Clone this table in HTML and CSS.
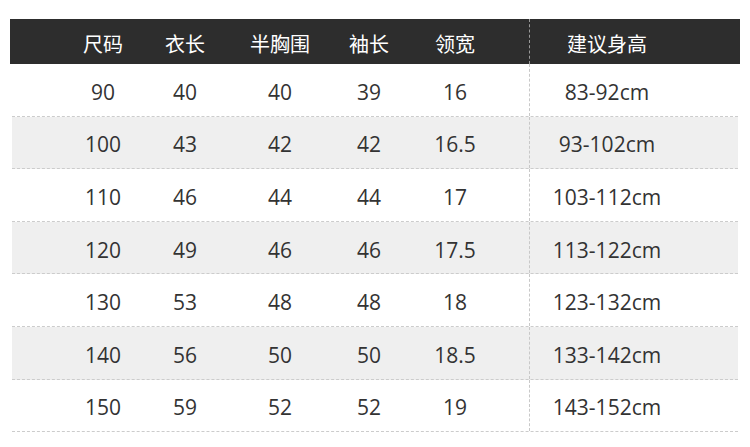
FILE: index.html
```html
<!DOCTYPE html>
<html lang="zh">
<head>
<meta charset="utf-8">
<link rel="stylesheet" href="styles.css">
</head>
<body>
<div class="table">
  <div class="row head">
    <span class="pad"></span>
    <span>尺码</span><span>衣长</span><span>半胸围</span><span>袖长</span><span>领宽</span><span class="gap"></span>
    <span class="h">建议身高</span>
  </div>
  <div class="body">
    <div class="row"><span class="pad"></span><span>90</span><span>40</span><span>40</span><span>39</span><span>16</span><span class="gap"></span><span class="h">83-92cm</span></div>
    <div class="row alt"><span class="pad"></span><span>100</span><span>43</span><span>42</span><span>42</span><span>16.5</span><span class="gap"></span><span class="h">93-102cm</span></div>
    <div class="row"><span class="pad"></span><span>110</span><span>46</span><span>44</span><span>44</span><span>17</span><span class="gap"></span><span class="h">103-112cm</span></div>
    <div class="row alt"><span class="pad"></span><span>120</span><span>49</span><span>46</span><span>46</span><span>17.5</span><span class="gap"></span><span class="h">113-122cm</span></div>
    <div class="row"><span class="pad"></span><span>130</span><span>53</span><span>48</span><span>48</span><span>18</span><span class="gap"></span><span class="h">123-132cm</span></div>
    <div class="row alt"><span class="pad"></span><span>140</span><span>56</span><span>50</span><span>50</span><span>18.5</span><span class="gap"></span><span class="h">133-142cm</span></div>
    <div class="row"><span class="pad"></span><span>150</span><span>59</span><span>52</span><span>52</span><span>19</span><span class="gap"></span><span class="h">143-152cm</span></div>
  </div>
</div>
</body>
</html>
```
FILE: styles.css
```css
html, body {
  margin: 0;
  padding: 0;
  background: #ffffff;
}
body {
  font-family: "Open Sans", "Noto Sans CJK SC", sans-serif;
  font-size: 21px;
  color: #333333;
}
.table {
  width: 730px;
  margin: 19px 0 0 10px;
}
.row {
  display: grid;
  grid-template-columns: 50px 86px 78px 112px 66px 106px 21px 1fr;
  align-items: center;
  text-align: center;
}
.row span {
  display: flex;
  align-items: center;
  justify-content: center;
  height: 100%;
  box-sizing: border-box;
}
.row .h {
  padding-right: 56px;
  border-left: 1px dashed #c8c8c8;
}
.head {
  height: 45px;
  background: #2d2d2d;
  color: #ffffff;
  font-family: "Noto Sans CJK SC", sans-serif;
  font-size: 20px;
}
.head span {
  padding-top: 3px;
}
.head .h {
  border-left-color: #9a9a9a;
}
.body {
  margin: 0 2px;
}
.body .row {
  grid-template-columns: 48px 86px 78px 112px 66px 106px 21px 1fr;
  height: 51.6px;
  border-bottom: 1px dashed #cccccc;
}
.body .row span {
  padding-top: 4px;
}
.body .row .h {
  padding-right: 54px;
}
.alt {
  background: #efefef;
}
```
